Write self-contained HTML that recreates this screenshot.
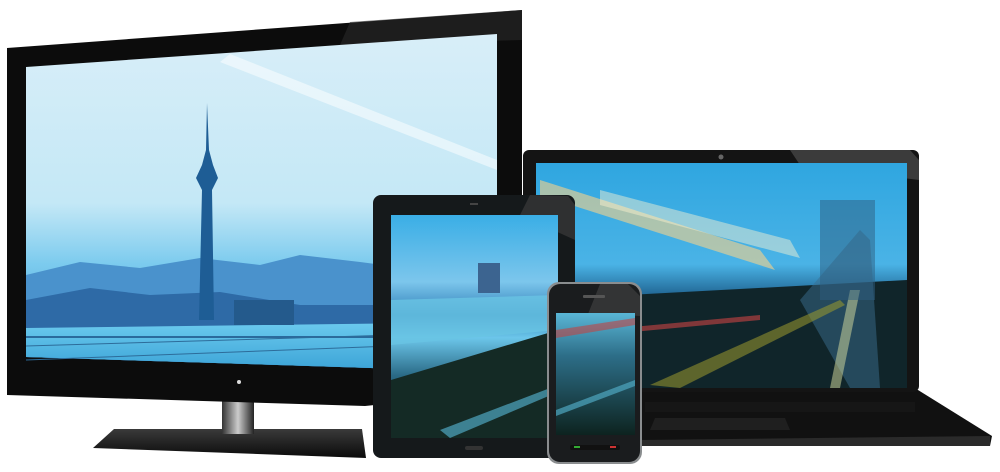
<!DOCTYPE html>
<html><head><meta charset="utf-8"><style>html,body{margin:0;padding:0;background:#fff;width:1000px;height:472px;overflow:hidden}</style></head>
<body>
<svg width="1000" height="472" viewBox="0 0 1000 472" xmlns="http://www.w3.org/2000/svg">
<defs>
<linearGradient id="sky" x1="0" y1="0" x2="0" y2="1">
<stop offset="0" stop-color="#d8eef8"/><stop offset="0.5" stop-color="#c4e8f6"/><stop offset="0.68" stop-color="#7ccbee"/><stop offset="1" stop-color="#3a96d0"/></linearGradient>
<linearGradient id="water" x1="0" y1="0" x2="0" y2="1"><stop offset="0" stop-color="#6ccaee"/><stop offset="1" stop-color="#3aa2d6"/></linearGradient>
<linearGradient id="lsky" x1="0" y1="0" x2="0" y2="1"><stop offset="0" stop-color="#2fa6e0"/><stop offset="0.45" stop-color="#4ab3e6"/><stop offset="0.6" stop-color="#1d5f8c"/><stop offset="1" stop-color="#0e2a30"/></linearGradient>
<linearGradient id="tsky" x1="0" y1="0" x2="0" y2="1"><stop offset="0" stop-color="#3aaee6"/><stop offset="0.3" stop-color="#7cc6ec"/><stop offset="0.45" stop-color="#2f7fb8"/><stop offset="0.55" stop-color="#6cc6ea"/><stop offset="0.72" stop-color="#2a6a86"/><stop offset="1" stop-color="#0f2a2a"/></linearGradient>
<linearGradient id="psky" x1="0" y1="0" x2="0" y2="1"><stop offset="0" stop-color="#5ab6d6"/><stop offset="0.35" stop-color="#2d6e88"/><stop offset="1" stop-color="#0d231f"/></linearGradient>
<linearGradient id="base" x1="0" y1="0" x2="0" y2="1"><stop offset="0" stop-color="#3a3a3a"/><stop offset="1" stop-color="#0a0a0a"/></linearGradient>
<linearGradient id="neck" x1="0" y1="0" x2="1" y2="0"><stop offset="0" stop-color="#333"/><stop offset="0.5" stop-color="#ccc"/><stop offset="1" stop-color="#222"/></linearGradient>
</defs>

<polygon points="114,429 362,429 366,458 93,448" fill="url(#base)"/>
<rect x="222" y="400" width="32" height="34" fill="url(#neck)"/>
<polygon points="7,48 522,10 522,390 365,406 7,395" fill="#0c0c0c"/>
<polygon points="350,22 522,10 522,40 340,45" fill="#2a2a2a" opacity="0.6"/>
<polygon points="26,67 497,34 497,372 26,357" fill="url(#sky)"/>
<polygon points="230,54 497,160 497,170 220,62" fill="#fff" opacity="0.5"/>
<polygon points="26,275 80,262 140,268 200,258 260,265 300,255 360,262 420,270 497,265 497,372 26,357" fill="#4a92cc"/>
<polygon points="26,300 90,288 150,295 220,292 300,305 380,305 497,302 497,372 26,357" fill="#2e6aa6"/>
<polygon points="26,328 497,322 497,372 26,357" fill="url(#water)"/>
<rect x="26" y="336" width="471" height="2" fill="#2a6a9c"/>
<g stroke="#2d6c9a" stroke-width="1">
<line x1="26" y1="360" x2="497" y2="342"/><line x1="26" y1="346" x2="497" y2="332"/>
</g>
<polygon points="199,320 202,190 196,178 202,165 206,150 207,103 209,150 213,165 218,178 212,190 214,320" fill="#1e5d95"/>
<rect x="234" y="300" width="60" height="25" fill="#245a8c"/>
<circle cx="239" cy="382" r="2" fill="#ddd"/>

<polygon points="560,390 918,390 992,436 990,446 640,446" fill="#111"/>
<polygon points="640,440 990,436 990,446 640,446" fill="#2a2a2a"/>
<polygon points="655,418 785,418 790,430 650,430" fill="#1f1f1f"/>
<rect x="645" y="402" width="270" height="10" fill="#161616"/>
<rect x="523" y="150" width="396" height="242" rx="6" fill="#141414"/>
<polygon points="790,150 910,150 919,160 919,180 800,165" fill="#555" opacity="0.6"/>
<circle cx="721" cy="157" r="2.5" fill="#666"/>
<rect x="536" y="163" width="371" height="225" fill="url(#lsky)"/>
<polygon points="540,180 760,250 775,270 540,195" fill="#f6d28a" opacity="0.6"/>
<polygon points="600,190 790,240 800,258 600,205" fill="#fff4d0" opacity="0.45"/>
<polygon points="536,300 907,280 907,388 536,388" fill="#10252a"/>
<polygon points="800,300 860,230 870,240 880,388 850,388" fill="#3a6d8e" opacity="0.5"/>
<polygon points="850,290 860,290 840,388 830,388" fill="#d9e0a0" opacity="0.5"/>
<polygon points="650,385 840,300 845,305 680,388" fill="#9d9b2e" opacity="0.55"/>
<polygon points="600,330 760,315 760,320 600,335" fill="#c44" opacity="0.6"/>
<rect x="820" y="200" width="55" height="100" fill="#2d5d80" opacity="0.5"/>

<rect x="373" y="195" width="202" height="263" rx="8" fill="#15191b"/>
<polygon points="530,195 568,196 575,205 575,240 520,215" fill="#3a3a3a" opacity="0.7"/>
<rect x="470" y="203" width="8" height="2" fill="#444"/>
<rect x="391" y="215" width="167" height="223" fill="url(#tsky)"/>
<rect x="478" y="263" width="22" height="30" fill="#3c6490"/>
<polygon points="391,300 558,295 558,330 391,345" fill="#69c4e4" opacity="0.8"/>
<polygon points="391,380 558,330 558,438 391,438" fill="#142a25"/>
<polygon points="440,430 558,385 558,392 450,438" fill="#4fa6c0" opacity="0.7"/>
<rect x="465" y="446" width="18" height="4" rx="2" fill="#333"/>

<rect x="547" y="282" width="95" height="182" rx="12" fill="#8a8d8f"/>
<rect x="549" y="284" width="91" height="178" rx="11" fill="#1a1c1e"/>
<polygon points="600,284 628,284 640,296 640,316 588,314" fill="#444" opacity="0.6"/>
<rect x="583" y="295" width="22" height="3" rx="1" fill="#555"/>
<rect x="556" y="313" width="79" height="122" fill="url(#psky)"/>
<polygon points="556,330 635,318 635,325 556,338" fill="#c04444" opacity="0.6"/>
<polygon points="556,410 635,380 635,386 556,416" fill="#4fa6c0" opacity="0.7"/>
<rect x="570" y="445" width="50" height="5" rx="2" fill="#111"/>
<rect x="574" y="446" width="6" height="2" fill="#3a3"/>
<rect x="610" y="446" width="6" height="2" fill="#c33"/>
</svg>
</body></html>
